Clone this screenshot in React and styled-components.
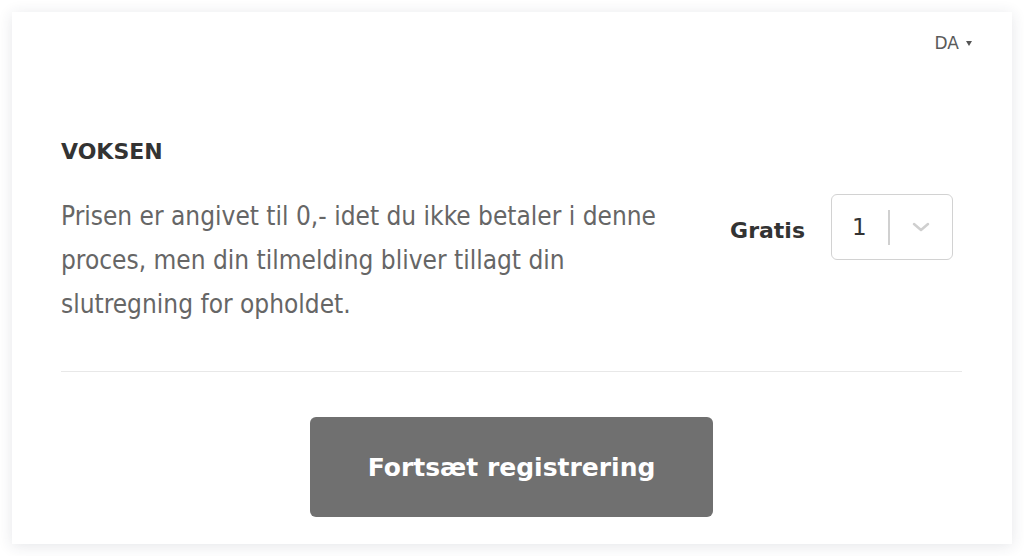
import React from "react";
import styled, { createGlobalStyle } from "styled-components";

const Global = createGlobalStyle`
  html, body { margin: 0; padding: 0; background: #ffffff; }
  body { font-family: "DejaVu Sans Condensed", "DejaVu Sans", sans-serif; }
`;

const Page = styled.div`
  padding: 12px;
  width: 1000px;
`;

const Card = styled.div`
  background: #fff;
  height: 532px;
  box-sizing: border-box;
  box-shadow: 0 2px 14px rgba(40, 50, 70, 0.12);
  padding: 0 50px 27px 49px;
  display: flex;
  flex-direction: column;
`;

const TopBar = styled.div`
  display: flex;
  justify-content: flex-end;
  padding-top: 19px;
  margin-right: -10px;
  height: 24px;
`;

const Lang = styled.div`
  font-family: "DejaVu Sans", sans-serif;
  font-size: 17px;
  color: #5a5a5a;
  display: flex;
  align-items: center;
  gap: 7px;
`;

const Caret = styled.span`
  width: 0;
  height: 0;
  border-left: 3px solid transparent;
  border-right: 3px solid transparent;
  border-top: 5px solid #555;
  margin-top: 2px;
`;

const Title = styled.h2`
  margin: 85px 0 0;
  font-family: "DejaVu Sans", sans-serif;
  font-weight: bold;
  font-size: 22px;
  line-height: 26px;
  color: #333;
`;

const Row = styled.div`
  display: flex;
  justify-content: space-between;
  align-items: flex-start;
  margin-top: 29px;
`;

const Desc = styled.p`
  margin: 0;
  width: 610px;
  font-size: 26px;
  line-height: 44px;
  color: #666;
`;

const PriceBox = styled.div`
  display: flex;
  align-items: center;
  gap: 26px;
  margin-right: 9px;
`;

const Price = styled.span`
  font-family: "DejaVu Sans", sans-serif;
  font-weight: bold;
  font-size: 22px;
  color: #333;
  margin-top: 6px;
`;

const Select = styled.div`
  width: 122px;
  height: 66px;
  box-sizing: border-box;
  border: 1.5px solid #d2d2d2;
  border-radius: 6px;
  display: flex;
  align-items: center;
`;

const SelectValue = styled.span`
  font-family: "DejaVu Sans", sans-serif;
  font-size: 23px;
  color: #333;
  width: 56px;
  padding-left: 20px;
  box-sizing: border-box;
`;

const Sep = styled.span`
  width: 1.5px;
  height: 35px;
  background: #d0d0d0;
`;

const Chevron = styled.span`
  flex: 1;
  display: flex;
  justify-content: center;
  align-items: center;
`;

const Divider = styled.hr`
  border: 0;
  border-top: 1.5px solid #e8e8e8;
  margin: 45px 0 0;
`;

const Footer = styled.div`
  display: flex;
  justify-content: center;
  margin-top: 45px;
`;

const Button = styled.button`
  width: 403px;
  height: 100px;
  border: 0;
  border-radius: 6px;
  background: #707070;
  color: #fff;
  font-family: "DejaVu Sans", sans-serif;
  font-weight: bold;
  font-size: 25px;
  cursor: pointer;
`;

export default function App() {
  return (
    <>
      <Global />
      <Page>
        <Card>
          <TopBar>
            <Lang>
              DA <Caret />
            </Lang>
          </TopBar>
          <Title>VOKSEN</Title>
          <Row>
            <Desc>
              Prisen er angivet til 0,- idet du ikke betaler i denne proces, men din tilmelding bliver tillagt din slutregning for opholdet.
            </Desc>
            <PriceBox>
              <Price>Gratis</Price>
              <Select>
                <SelectValue>1</SelectValue>
                <Sep />
                <Chevron>
                  <svg width="20" height="12" viewBox="0 0 20 12">
                    <path d="M3 3 L10 9 L17 3" fill="none" stroke="#cfcfcf" strokeWidth="2.5" strokeLinecap="round" strokeLinejoin="round" />
                  </svg>
                </Chevron>
              </Select>
            </PriceBox>
          </Row>
          <Divider />
          <Footer>
            <Button>Fortsæt registrering</Button>
          </Footer>
        </Card>
      </Page>
    </>
  );
}
